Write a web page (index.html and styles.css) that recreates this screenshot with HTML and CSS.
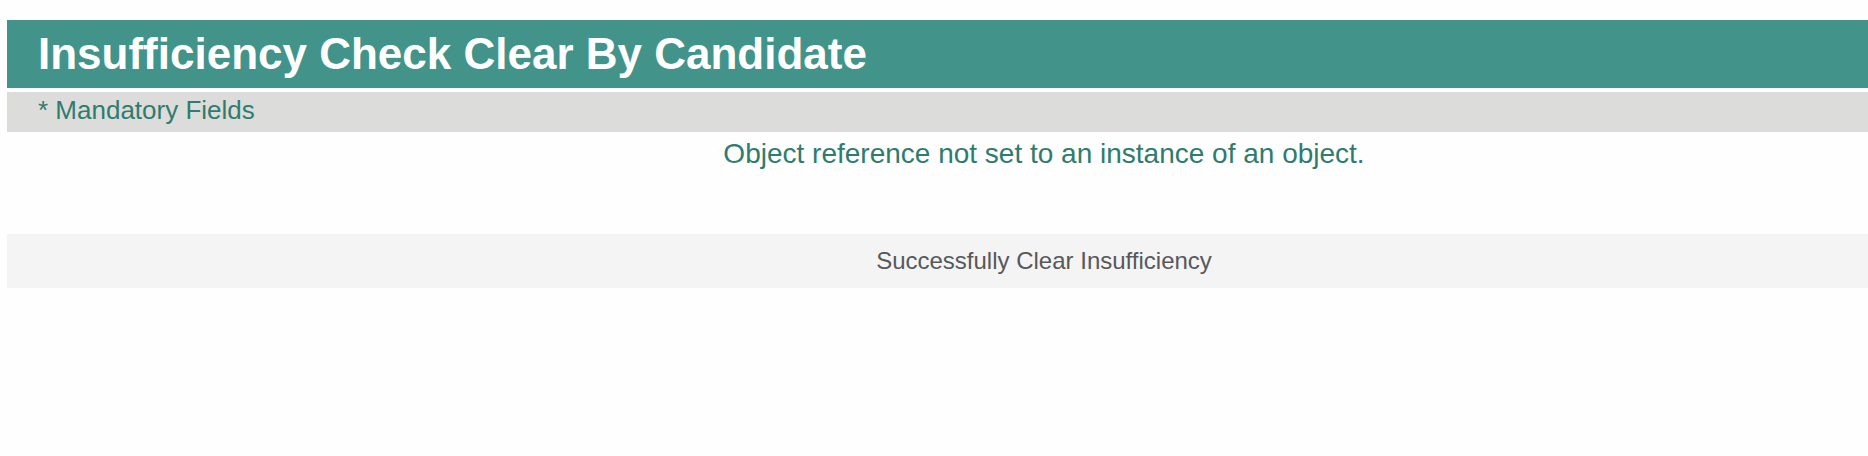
FILE: index.html
```html
<!DOCTYPE html>
<html>
<head>
<meta charset="utf-8">
<link rel="stylesheet" href="styles.css">
</head>
<body>
<div class="page">
  <div class="title-bar"><h1 class="title">Insufficiency Check Clear By Candidate</h1></div>
  <div class="mandatory-bar"><span class="mandatory">* Mandatory Fields</span></div>
  <div class="content">
    <div class="spacer"></div>
    <div class="message">Object reference not set to an instance of an object.</div>
  </div>
  <div class="status-bar">
    <div class="spacer"></div>
    <div class="status">Successfully Clear Insufficiency</div>
  </div>
</div>
</body>
</html>
```
FILE: styles.css
```css
html, body {
  margin: 0;
  padding: 0;
  background: #fefefe;
  font-family: "Liberation Sans", Arial, sans-serif;
}
.page {
  padding: 20px 0 0 7px;
  display: flex;
  flex-direction: column;
}
.title-bar {
  background: #42948a;
  height: 68px;
  display: flex;
  align-items: center;
  padding-left: 31px;
}
.title {
  margin: 0;
  color: #ffffff;
  font-size: 44px;
  font-weight: bold;
  line-height: 1;
}
.mandatory-bar {
  margin-top: 4px;
  background: #dcdcdb;
  height: 40px;
  box-sizing: border-box;
  padding-bottom: 4px;
  display: flex;
  align-items: center;
  padding-left: 31px;
}
.mandatory {
  color: #2f7c6e;
  font-size: 26px;
  line-height: 1;
}
.content {
  display: grid;
  grid-template-columns: 213px 1fr;
  height: 102px;
}
.message {
  color: #2f7c6e;
  font-size: 28px;
  text-align: center;
  padding-top: 5px;
  line-height: 1.2;
}
.status-bar {
  display: grid;
  grid-template-columns: 213px 1fr;
  background: #f4f4f4;
  height: 54px;
  align-items: center;
}
.status {
  color: #58585a;
  font-size: 24px;
  text-align: center;
}
```
